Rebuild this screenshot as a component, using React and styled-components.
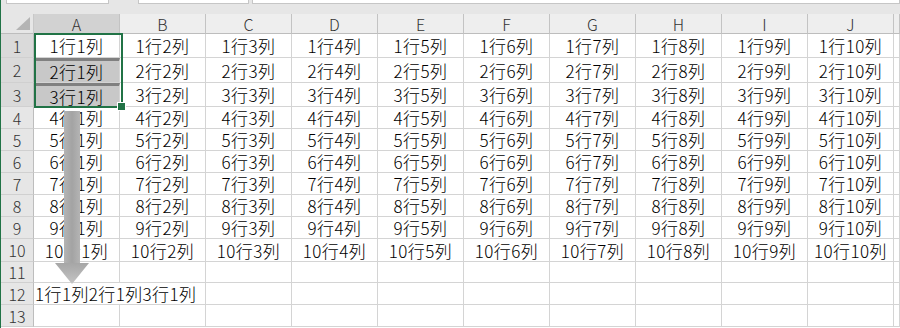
import React from "react";
import styled, { createGlobalStyle } from "styled-components";

const GlobalStyle = createGlobalStyle`
  html, body {
    margin: 0;
    padding: 0;
    background: #ffffff;
    overflow: hidden;
  }
  * {
    box-sizing: border-box;
  }
`;

const columns = ["A", "B", "C", "D", "E", "F", "G", "H", "I", "J"];
const rowHeights = [24, 25, 24, 22, 22, 22, 22, 22, 22, 23, 21, 22, 22];
const selectedRows = [1, 2, 3];
const draggedRows = [2, 3];

const Frame = styled.div`
  position: relative;
  width: 900px;
  height: 328px;
  border-left: 1px solid #217346;
  background: #ffffff;
  font-family: "Noto Sans CJK JP", "Noto Sans", sans-serif;
  font-weight: 300;
  color: #000000;
  overflow: hidden;
`;

const TopBar = styled.div`
  display: flex;
  align-items: flex-start;
  height: 14px;
  padding-left: 5px;
  background: #e6e6e6;
`;

const InputBox = styled.div`
  height: 4px;
  width: ${({ $width }) => ($width ? `${$width}px` : "auto")};
  flex: ${({ $width }) => ($width ? "none" : "1")};
  margin-left: ${({ $gap }) => `${$gap || 0}px`};
  background: #ffffff;
  border: 1px solid #c6c6c6;
  border-top: none;
`;

const Sheet = styled.div`
  display: grid;
  grid-template-columns: 33px repeat(10, 86px) 1fr;
  grid-template-rows: 20px ${rowHeights.map((h) => `${h}px`).join(" ")};
`;

const Corner = styled.div`
  position: relative;
  background: #e6e6e6;
  border-right: 1px solid #c8c8c8;
  border-bottom: 1px solid #bdbdbd;

  &::after {
    content: "";
    position: absolute;
    right: 3px;
    bottom: 3px;
    width: 0;
    height: 0;
    border-left: 14px solid transparent;
    border-bottom: 13px solid #b4b4b4;
  }
`;

const ColHead = styled.div`
  display: flex;
  align-items: center;
  justify-content: center;
  background: ${({ $active }) => ($active ? "#d2d2d2" : "#eeeeee")};
  border-right: 1px solid #c3c3c3;
  border-bottom: 1px solid #bdbdbd;
  font-size: 16px;
  color: #333333;
  line-height: 16px;
`;

const RowHead = styled.div`
  display: flex;
  align-items: center;
  justify-content: center;
  background: ${({ $active }) => ($active ? "#dadada" : "#e6e6e6")};
  border-right: 1px solid #bdbdbd;
  border-bottom: 1px solid #d0d0d0;
  font-size: 16px;
  color: #333333;
  line-height: 16px;
`;

const Cell = styled.div`
  display: flex;
  align-items: center;
  justify-content: ${({ $left }) => ($left ? "flex-start" : "center")};
  padding-left: ${({ $left }) => ($left ? "1px" : "0")};
  grid-column: ${({ $span }) => ($span ? `span ${$span}` : "auto")};
  background: ${({ $dragged }) => ($dragged ? "#c8c8c8" : "#ffffff")};
  border-top: ${({ $dragged }) => ($dragged ? "3px solid #808080" : "none")};
  border-right: 1px solid #d4d4d4;
  border-bottom: 1px solid #d4d4d4;
  font-size: 17px;
  line-height: 17px;
  white-space: nowrap;
  letter-spacing: 0.4px;
`;

const Selection = styled.div`
  position: absolute;
  left: 33px;
  top: 33px;
  width: 89px;
  height: 75px;
  border: 2px solid #217346;
  pointer-events: none;

  &::after {
    content: "";
    position: absolute;
    right: -5px;
    bottom: -5px;
    width: 7px;
    height: 7px;
    background: #217346;
    border: 1px solid #ffffff;
  }
`;

const DragArrow = styled.svg`
  position: absolute;
  left: 53px;
  top: 111px;
  pointer-events: none;
`;

const cellText = (r, c) => `${r}行${c}列`;

const App = () => {
  return (
    <>
      <GlobalStyle />
      <Frame>
        <TopBar>
          <InputBox $width={103} />
          <InputBox $width={111} $gap={29} />
          <InputBox $gap={3} />
        </TopBar>
        <Sheet>
          <Corner />
          {columns.map((col) => (
            <ColHead key={col} $active={col === "A"}>
              {col}
            </ColHead>
          ))}
          <ColHead />

          {rowHeights.map((_, i) => {
            const r = i + 1;
            return (
              <React.Fragment key={r}>
                <RowHead $active={selectedRows.includes(r)}>{r}</RowHead>
                {r <= 10 &&
                  columns.map((col, c) => (
                    <Cell key={col} $dragged={c === 0 && draggedRows.includes(r)}>
                      {cellText(r, c + 1)}
                    </Cell>
                  ))}
                {r === 12 && (
                  <>
                    <Cell $left $span={2}>
                      1行1列2行1列3行1列
                    </Cell>
                    {columns.slice(2).map((col) => (
                      <Cell key={col} />
                    ))}
                  </>
                )}
                {r > 10 && r !== 12 && columns.map((col) => <Cell key={col} />)}
                <Cell />
              </React.Fragment>
            );
          })}
        </Sheet>

        <Selection />

        <DragArrow width="38" height="176" viewBox="0 0 38 176">
          <defs>
            <linearGradient id="shaft" x1="0" y1="0" x2="1" y2="0">
              <stop offset="0" stopColor="#b4b4b4" />
              <stop offset="0.5" stopColor="#a3a3a3" />
              <stop offset="1" stopColor="#b4b4b4" />
            </linearGradient>
            <linearGradient id="head" x1="0" y1="0" x2="0" y2="1">
              <stop offset="0" stopColor="#a6a6a6" />
              <stop offset="1" stopColor="#c4c4c4" />
            </linearGradient>
          </defs>
          <rect x="10" y="0" width="16" height="152" fill="url(#shaft)" />
          <polygon points="1,152 35,152 18,173" fill="url(#head)" />
        </DragArrow>
      </Frame>
    </>
  );
};

export default App;
